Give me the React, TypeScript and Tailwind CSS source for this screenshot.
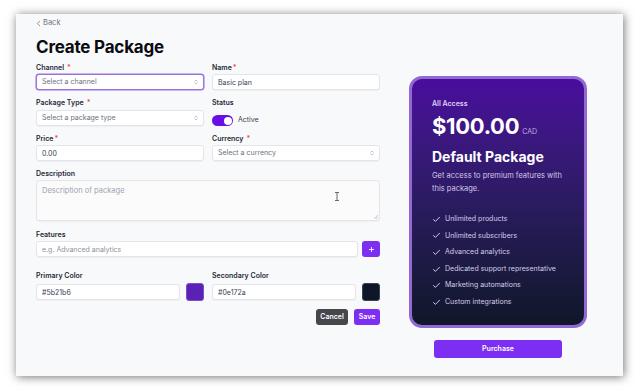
import { Check, ChevronLeft, ChevronsUpDown, Plus } from 'lucide-react'

const features = [
  'Unlimited products',
  'Unlimited subscribers',
  'Advanced analytics',
  'Dedicated support representative',
  'Marketing automations',
  'Custom integrations',
]

const Label = ({ text, required, gap = 'ml-[3px]' }: { text: string; required?: boolean; gap?: string }) => (
  <div className="h-[10px] text-[7px] font-semibold leading-[10px] text-[#1f2937]">
    {text}
    {required && <span className={`${gap} text-[#ef4444]`}>*</span>}
  </div>
)

const inputCls =
  'block h-[16px] w-full rounded-[3px] border border-[#e3e5e9] bg-white px-[5px] text-[7px] text-[#374151] shadow-[0_1px_1px_rgba(0,0,0,0.04)] outline-none placeholder:text-[#8b919a]'

const Select = ({ placeholder, focused }: { placeholder: string; focused?: boolean }) => (
  <div
    className={`flex h-[16px] w-full items-center justify-between rounded-[3px] border bg-white pl-[5px] pr-[4px] text-[7px] text-[#6b7280] ${
      focused
        ? 'border-[#9a72e0] shadow-[0_0_0_0.5px_#9a72e0]'
        : 'border-[#e3e5e9] shadow-[0_1px_1px_rgba(0,0,0,0.04)]'
    }`}
  >
    <span>{placeholder}</span>
    <ChevronsUpDown className="h-[6px] w-[6px] text-[#9ca3af]" strokeWidth={2.5} />
  </div>
)

export default function App() {
  return (
    <div className="h-[390px] w-[640px] overflow-hidden bg-white pl-[16px] pt-[14px] font-['Inter',sans-serif]">
      <div className="flex h-[362px] w-[607px] bg-[#f8f9fb] shadow-[1px_1px_9px_rgba(0,0,0,0.55)]">
        {/* form */}
        <div className="ml-[20px] flex w-[344px] flex-col">
          <div className="mt-[4px] flex h-[10px] items-center text-[7.5px] text-[#6b7280]">
            <ChevronLeft className="h-[9px] w-[9px] -ml-[2px]" strokeWidth={2} />
            <span>Back</span>
          </div>
          <h1 className="mt-[9px] h-[20px] text-[17px] font-bold leading-[20px] tracking-[-0.2px] text-[#0b0b0f]">
            Create Package
          </h1>

          <div className="mt-[6px] grid grid-cols-2 gap-x-[8px]">
            <div>
              <Label text="Channel" required />
              <div className="mt-[1px]">
                <Select placeholder="Select a channel" focused />
              </div>
            </div>
            <div>
              <Label text="Name" required gap="ml-[1px]" />
              <input className={`mt-[1px] ${inputCls}`} defaultValue="Basic plan" readOnly />
            </div>

            <div className="mt-[8px]">
              <Label text="Package Type" required />
              <div className="mt-[2px]">
                <Select placeholder="Select a package type" />
              </div>
            </div>
            <div className="mt-[8px]">
              <Label text="Status" />
              <div className="mt-[7px] flex items-center">
                <div className="flex h-[11px] w-[21px] items-center justify-end rounded-full bg-[#6a0ee8] pr-[1.5px]">
                  <div className="h-[8px] w-[8px] rounded-full bg-white" />
                </div>
                <span className="ml-[5px] text-[7px] text-[#374151]">Active</span>
              </div>
            </div>

            <div className="mt-[8px]">
              <Label text="Price" required gap="ml-[1px]" />
              <input className={`mt-[1px] ${inputCls}`} defaultValue="0.00" readOnly />
            </div>
            <div className="mt-[8px]">
              <Label text="Currency" required />
              <div className="mt-[1px]">
                <Select placeholder="Select a currency" />
              </div>
            </div>
          </div>

          <div className="mt-[8px]">
            <Label text="Description" />
            <div className="relative mt-[1px] h-[41px] w-full rounded-[3px] border border-[#e3e5e9] bg-[#fbfbfc] px-[5px] pt-[4px] text-[7.5px] text-[#9ca3af] shadow-[0_1px_1px_rgba(0,0,0,0.04)]">
              Description of package
              {/* text cursor */}
              <svg className="absolute left-[298px] top-[11px]" width="4" height="9" viewBox="0 0 4 9">
                <path d="M0 0.5h4M0 8.5h4M2 0.5v8" stroke="#6b6b6b" strokeWidth="1" fill="none" />
              </svg>
              <svg className="absolute bottom-[1px] right-[1px]" width="4" height="4" viewBox="0 0 4 4">
                <path d="M0 4L4 0M2 4L4 2" stroke="#9ca3af" strokeWidth="0.6" />
              </svg>
            </div>
          </div>

          <div className="mt-[9px]">
            <Label text="Features" />
            <div className="mt-[1px] flex gap-[4px]">
              <input className={inputCls} placeholder="e.g. Advanced analytics" readOnly />
              <button className="flex h-[16px] w-[18px] shrink-0 items-center justify-center rounded-[3px] bg-[#7c2ff2] text-white">
                <Plus className="h-[7px] w-[7px]" strokeWidth={3} />
              </button>
            </div>
          </div>

          <div className="mt-[14px] grid grid-cols-2 gap-x-[8px]">
            <div>
              <Label text="Primary Color" />
              <div className="mt-[2px] flex items-center gap-[6px]">
                <input className={inputCls} defaultValue="#5b21b6" readOnly />
                <div className="h-[18px] w-[18px] shrink-0 rounded-[3px] border border-[#7a4fc9] bg-[#5b21b6]" />
              </div>
            </div>
            <div>
              <Label text="Secondary Color" />
              <div className="mt-[2px] flex items-center gap-[6px]">
                <input className={inputCls} defaultValue="#0e172a" readOnly />
                <div className="h-[18px] w-[18px] shrink-0 rounded-[3px] border border-[#3a4150] bg-[#0e172a]" />
              </div>
            </div>
          </div>

          <div className="mt-[8px] flex justify-end gap-[6px]">
            <button className="h-[16px] w-[32px] rounded-[3px] bg-[#46464c] text-[7px] font-semibold text-white">
              Cancel
            </button>
            <button className="h-[16px] w-[26px] rounded-[3px] bg-[#7c2ff2] text-[7px] font-semibold text-white">
              Save
            </button>
          </div>
        </div>

        {/* preview */}
        <div className="ml-[29px] flex w-[178px] flex-col items-center pt-[62px]">
          <div className="h-[252px] w-[178px] rounded-[13px] border-[3px] border-[#9468d2] bg-gradient-to-b from-[#4a0c9e] to-[#0f1729] pl-[20px] pt-[20px]">
            <div className="text-[7px] font-semibold leading-[10px] text-[#dcd0f2]">All Access</div>
            <div className="mt-[5px] flex items-baseline">
              <span className="text-[22px] font-bold leading-[24px] tracking-[-0.3px] text-white">$100.00</span>
              <span className="ml-[3px] text-[7px] text-[#bfaedf]">CAD</span>
            </div>
            <div className="mt-[10px] text-[14px] font-bold leading-[18px] text-white">Default Package</div>
            <p className="mt-[4px] w-[140px] text-[7.5px] leading-[12.5px] text-[#d2c8e8]">
              Get access to premium features with this package.
            </p>
            <ul className="mt-[16px] flex flex-col">
              {features.map((f) => (
                <li key={f} className="flex h-[16.6px] items-center text-[7px] text-[#d4cdea]">
                  <Check className="h-[9px] w-[9px] text-[#ddd6f3]" strokeWidth={2.5} />
                  <span className="ml-[4px]">{f}</span>
                </li>
              ))}
            </ul>
          </div>
          <button className="mt-[12px] h-[18px] w-[128px] rounded-[3px] bg-[#7c2ff2] text-[7px] font-semibold text-white">
            Purchase
          </button>
        </div>
      </div>
    </div>
  )
}
